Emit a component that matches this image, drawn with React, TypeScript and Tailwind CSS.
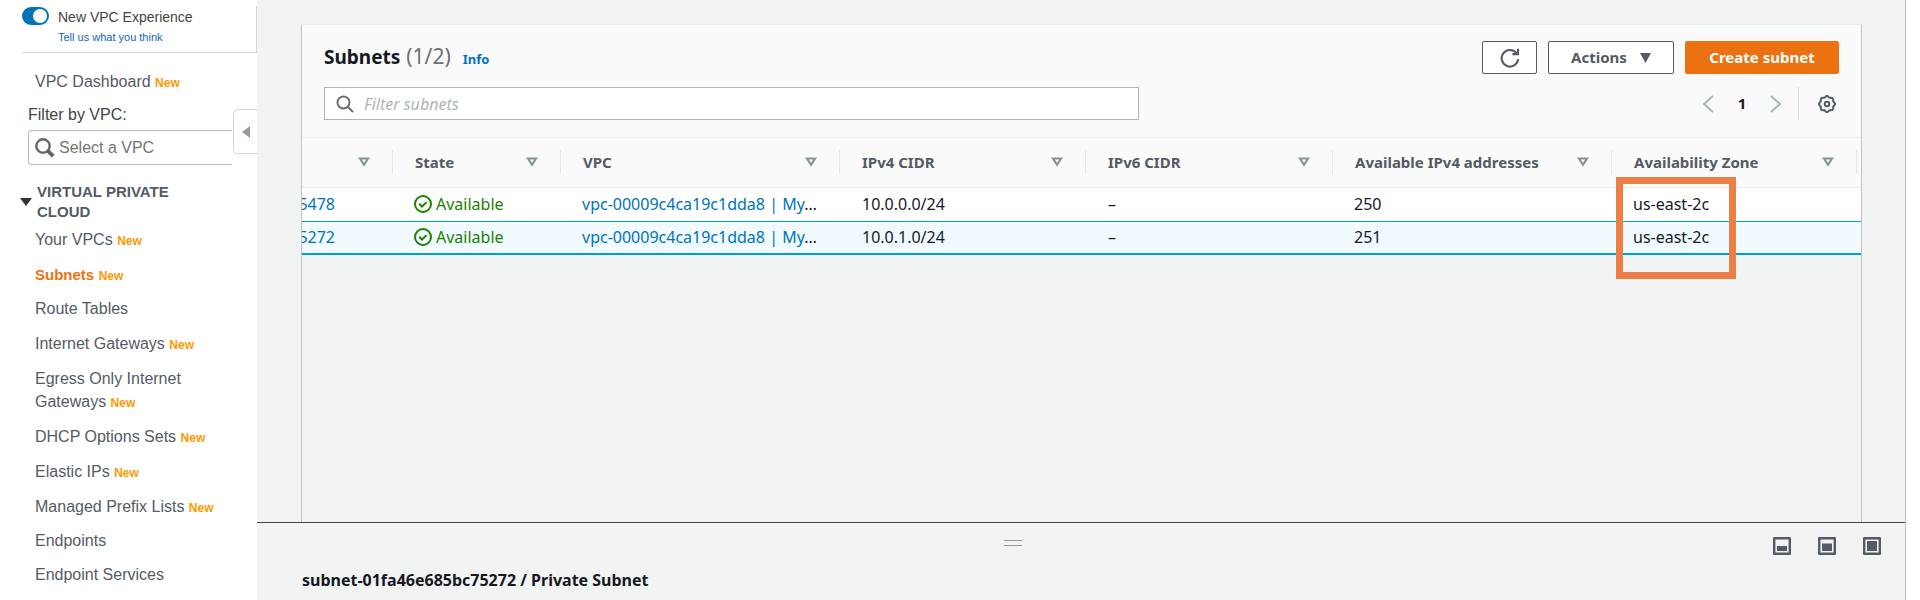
import type { ReactNode } from "react";

const NAV: { label: string; isNew?: boolean; active?: boolean }[] = [
  { label: "Your VPCs", isNew: true },
  { label: "Subnets", isNew: true, active: true },
  { label: "Route Tables" },
  { label: "Internet Gateways", isNew: true },
  { label: "Egress Only Internet Gateways", isNew: true },
  { label: "DHCP Options Sets", isNew: true },
  { label: "Elastic IPs", isNew: true },
  { label: "Managed Prefix Lists", isNew: true },
  { label: "Endpoints" },
  { label: "Endpoint Services" },
];

const COLUMNS = ["", "State", "VPC", "IPv4 CIDR", "IPv6 CIDR", "Available IPv4 addresses", "Availability Zone"];

const SUBNETS = [
  { id: "5478", cidr: "10.0.0.0/24", free: 250, selected: false },
  { id: "5272", cidr: "10.0.1.0/24", free: 251, selected: true },
];

function NewTag() {
  return <span className="text-[12px] font-bold leading-none text-[#ff9900]">New</span>;
}

function SearchIcon() {
  return (
    <svg viewBox="0 0 18 18" className="size-[18px] shrink-0" fill="none" stroke="#687078" strokeWidth="2">
      <circle cx="7.5" cy="7.5" r="6" />
      <path d="M12 12l5 5" />
    </svg>
  );
}

function VpcSearchIcon() {
  return (
    <svg viewBox="0 0 20 20" className="size-5 shrink-0" fill="none" stroke="#666">
      <circle cx="8" cy="8" r="6.7" strokeWidth="2.4" />
      <path d="M12.6 12.6l5.6 5.6" strokeWidth="4" />
    </svg>
  );
}

function SortIcon() {
  return (
    <svg viewBox="0 0 12 10" className="h-[10px] w-3 shrink-0" fill="none" stroke="#879596" strokeWidth="2.2">
      <path d="M2 1.5h8L6 7.8z" />
    </svg>
  );
}

function CheckIcon() {
  return (
    <svg viewBox="0 0 18 18" className="size-[18px] shrink-0" fill="none" stroke="#1d8102" strokeWidth="2">
      <circle cx="9" cy="9" r="8" />
      <path d="M5.2 8.8l2.8 2.7 4.6-4.4" />
    </svg>
  );
}

function RefreshIcon() {
  return (
    <svg viewBox="0 0 20 20" className="size-5" fill="none" stroke="#545b64" strokeWidth="2.1">
      <path d="M18.2 11.2A8.3 8.3 0 1 1 16.4 5" />
      <path d="M12.4 6.1H18V.8" />
    </svg>
  );
}

// Outline of a cog with eight rounded teeth, centred in an 18-unit box.
const GEAR_POINTS = Array.from({ length: 96 }, (_, i) => {
  const angle = (i / 96) * 2 * Math.PI;
  const radius = 7.4 + 0.6 * Math.cos(8 * angle);
  return `${(9 + radius * Math.cos(angle)).toFixed(2)},${(9 + radius * Math.sin(angle)).toFixed(2)}`;
}).join(" ");

function GearIcon() {
  return (
    <svg viewBox="0 0 18 18" className="size-[18px]" fill="none" stroke="#545b64" strokeWidth="2">
      <circle cx="9" cy="9" r="2.3" />
      <polygon points={GEAR_POINTS} strokeLinejoin="round" />
    </svg>
  );
}

function Chevron({ d }: { d: string }) {
  return (
    <svg viewBox="0 0 12 18" className="h-[18px] w-3" fill="none" stroke="#aab7b8" strokeWidth="2">
      <path d={d} />
    </svg>
  );
}

function PaneIcon({ children }: { children: ReactNode }) {
  return (
    <svg viewBox="0 0 18 18" className="size-[18px]">
      <rect x="1.2" y="1.2" width="15.6" height="15.6" fill="none" stroke="#545b64" strokeWidth="2.4" strokeLinejoin="round" />
      {children}
    </svg>
  );
}

function Sidebar() {
  return (
    <aside className="relative w-[257px] shrink-0 bg-white pt-[6px] font-['Liberation_Sans',sans-serif] text-[16px] text-[#545b64]">
      <div className="ml-[22px] flex h-[47px] items-start gap-[9px] border-r border-b border-[#d5d8d8]">
        <button type="button" role="switch" aria-checked="true" aria-label="New VPC Experience" className="mt-px flex h-[18px] w-[27px] items-center justify-end rounded-full bg-[#0073bb] px-0.5">
          <span className="size-[14px] rounded-full bg-white" />
        </button>
        <div>
          <div className="text-[14px] leading-[22px] text-[#444]">New VPC Experience</div>
          <a href="#feedback" className="block text-[11px] leading-[18px] text-[#1166bb]">Tell us what you think</a>
        </div>
      </div>

      <a href="#dashboard" className="ml-[35px] mt-[17px] block leading-[23px]">
        VPC Dashboard <NewTag />
      </a>
      <label htmlFor="vpc" className="ml-7 mt-[10px] block leading-[23px] text-[#444]">Filter by VPC:</label>
      <div className="ml-7 mr-[25px] mt-1 flex h-[35px] items-center gap-1 rounded-l-[4px] border border-r-0 border-[#bbb] pl-[6px]">
        <VpcSearchIcon />
        <input id="vpc" placeholder="Select a VPC" className="min-w-0 flex-1 bg-transparent outline-none placeholder:text-[#757575]" />
      </div>

      <button type="button" aria-label="Collapse navigation" className="absolute right-0 top-[109px] flex h-[45px] w-6 items-center justify-center rounded-l-[5px] border border-r-0 border-[#d5d8d8] bg-white">
        <svg viewBox="0 0 8 12" className="h-3 w-2" fill="#999">
          <path d="M8 0v12L0 6z" />
        </svg>
      </button>

      <h2 className="mt-[17px] flex items-center gap-[5px] pl-5 pr-14 text-[15px] font-bold leading-5">
        <svg viewBox="0 0 12 8" className="h-2 w-3 shrink-0" fill="#333">
          <path d="M0 0h12L6 8z" />
        </svg>
        VIRTUAL PRIVATE CLOUD
      </h2>
      <ul className="mt-[6px] flex flex-col gap-3 pl-[35px] pr-10">
        {NAV.map((item) => (
          <li key={item.label} className={item.isNew ? "leading-[23px]" : "leading-[22px]"}>
            <a href="#nav" className={item.active ? "text-[15px] font-bold text-[#ec7211]" : ""}>
              {item.label}
            </a>{" "}
            {item.isNew && <NewTag />}
          </li>
        ))}
      </ul>
    </aside>
  );
}

function PanelHeader() {
  return (
    <header className="border-b border-[#eaeded] bg-[#fafafa] px-[22px] pb-[17px] pt-4">
      <div className="flex h-[33px] items-center justify-between">
        <h1 className="flex items-baseline text-[19px] font-bold leading-6 text-[#16191f]">
          Subnets
          <span className="ml-[6px] text-[21px] font-normal text-[#687078]">(1/2)</span>
          <a href="#info" className="ml-3 text-[13px] text-[#0073bb]">Info</a>
        </h1>
        <div className="flex gap-[11px] text-[15px] font-bold text-[#545b64]">
          <button type="button" aria-label="Refresh" className="flex h-[33px] w-[55px] items-center justify-center rounded-[2px] border border-[#545b64] bg-white">
            <RefreshIcon />
          </button>
          <button type="button" className="flex h-[33px] w-[126px] items-center justify-center gap-[13px] rounded-[2px] border border-[#545b64] bg-white">
            Actions
            <svg viewBox="0 0 11 10" className="h-[10px] w-[11px]" fill="#545b64">
              <path d="M0 0h11L5.5 10z" />
            </svg>
          </button>
          <button type="button" className="h-[33px] w-[154px] rounded-[2px] bg-[#ec7211] text-white">
            Create subnet
          </button>
        </div>
      </div>
      <div className="mt-[13px] flex items-center justify-between">
        <label className="flex h-[33px] w-[53.8%] items-center gap-[10px] border border-[#aab7b8] bg-white pl-[11px]">
          <SearchIcon />
          <input aria-label="Filter subnets" placeholder="Filter subnets" className="min-w-0 flex-1 bg-transparent text-[16px] outline-none placeholder:italic placeholder:text-[#aab7b8]" />
        </label>
        <div className="flex items-center">
          <button type="button" aria-label="Previous page"><Chevron d="M11 1L2 9l9 8" /></button>
          <button type="button" className="w-14 text-center text-[15px] font-bold text-[#16191f]">1</button>
          <button type="button" aria-label="Next page"><Chevron d="M1 1l9 8-9 8" /></button>
          <span className="ml-4 h-[33px] border-l border-[#d5dbdb]" />
          <button type="button" aria-label="Preferences" className="ml-[19px] mr-[3px]"><GearIcon /></button>
        </div>
      </div>
    </header>
  );
}

function SubnetTable() {
  return (
    <table className="w-full table-fixed border-collapse text-left">
      <colgroup>
        <col className="w-[91px]" />
        <col className="w-[168px]" />
        <col className="w-[279px]" />
        <col className="w-[246px]" />
        <col className="w-[247px]" />
        <col className="w-[279px]" />
        <col />
        <col className="w-1" />
      </colgroup>
      <thead>
        <tr className="h-[49px] border-b border-[#eaeded] bg-[#fafafa] text-[15px] text-[#545b64]">
          {COLUMNS.map((name, i) => (
            <th key={i} className="p-0 font-bold">
              <div className="flex h-6 items-center justify-between border-r border-[#e4e8e8] px-[22px]">
                <span className="whitespace-nowrap">{name}</span>
                <SortIcon />
              </div>
            </th>
          ))}
          <td />
        </tr>
      </thead>
      <tbody className="text-[16px] leading-6 text-[#16191f]">
        {SUBNETS.map((row, i) => (
          <tr key={row.id} className={row.selected ? "h-[33px] border-t border-b-2 border-[#00a1c9] bg-[#f1faff]" : "h-[34px] bg-white"}>
            <td className="p-0">
              <div className="flex w-[33px] justify-end overflow-hidden">
                <a href="#subnet" className="text-[#0073bb]">{row.id}</a>
              </div>
            </td>
            <td className="p-0 pl-[21px]">
              <span className="flex items-center gap-1 text-[#1d8102]"><CheckIcon />Available</span>
            </td>
            <td className="truncate p-0 pl-[21px] pr-4">
              <a href="#vpc" className="text-[#0073bb]">vpc-00009c4ca19c1dda8 | My</a>…
            </td>
            <td className="p-0 pl-[22px]">{row.cidr}</td>
            <td className="p-0 pl-[22px]">–</td>
            <td className="p-0 pl-[21px]">{row.free}</td>
            <td className="relative p-0 pl-[21px]">
              us-east-2c
              {i === 0 && <div className="absolute -top-[11px] left-1 z-10 h-[102px] w-[120px] border-[7px] border-[#eb7f46]" />}
            </td>
            <td />
          </tr>
        ))}
      </tbody>
    </table>
  );
}

function DetailPane() {
  return (
    <section className="h-[78px] border-t border-[#37475a] pl-[45px] pr-6">
      <div className="grid grid-cols-[45fr_18px_55fr] items-start pt-[14px]">
        <span />
        <div className="mt-[3px] h-[6px] border-y border-[#999]" />
        <div className="flex justify-end gap-[27px]">
          <button type="button" aria-label="Small pane"><PaneIcon><rect x="4" y="9" width="10" height="5" fill="#545b64" /></PaneIcon></button>
          <button type="button" aria-label="Half pane"><PaneIcon><rect x="4" y="6.5" width="10" height="7.5" fill="#545b64" /></PaneIcon></button>
          <button type="button" aria-label="Full pane"><PaneIcon><rect x="4" y="4" width="10" height="10" fill="#545b64" /></PaneIcon></button>
        </div>
      </div>
      <h2 className="mt-[13px] text-[16px] font-bold leading-6 text-[#16191f]">subnet-01fa46e685bc75272 / Private Subnet</h2>
    </section>
  );
}

export default function App() {
  return (
    <div className="flex min-h-screen bg-white pr-[14px]">
      <Sidebar />
      <main className="flex min-w-0 flex-1 flex-col border-r border-[#bcc0c0] bg-[#f2f3f3] font-['Noto_Sans',sans-serif]">
        <section className="ml-11 mr-[43px] mt-6 flex-1 overflow-hidden border-x border-t border-x-[#bfc3c3] border-t-[#eaeded]">
          <PanelHeader />
          <SubnetTable />
        </section>
        <DetailPane />
      </main>
    </div>
  );
}
